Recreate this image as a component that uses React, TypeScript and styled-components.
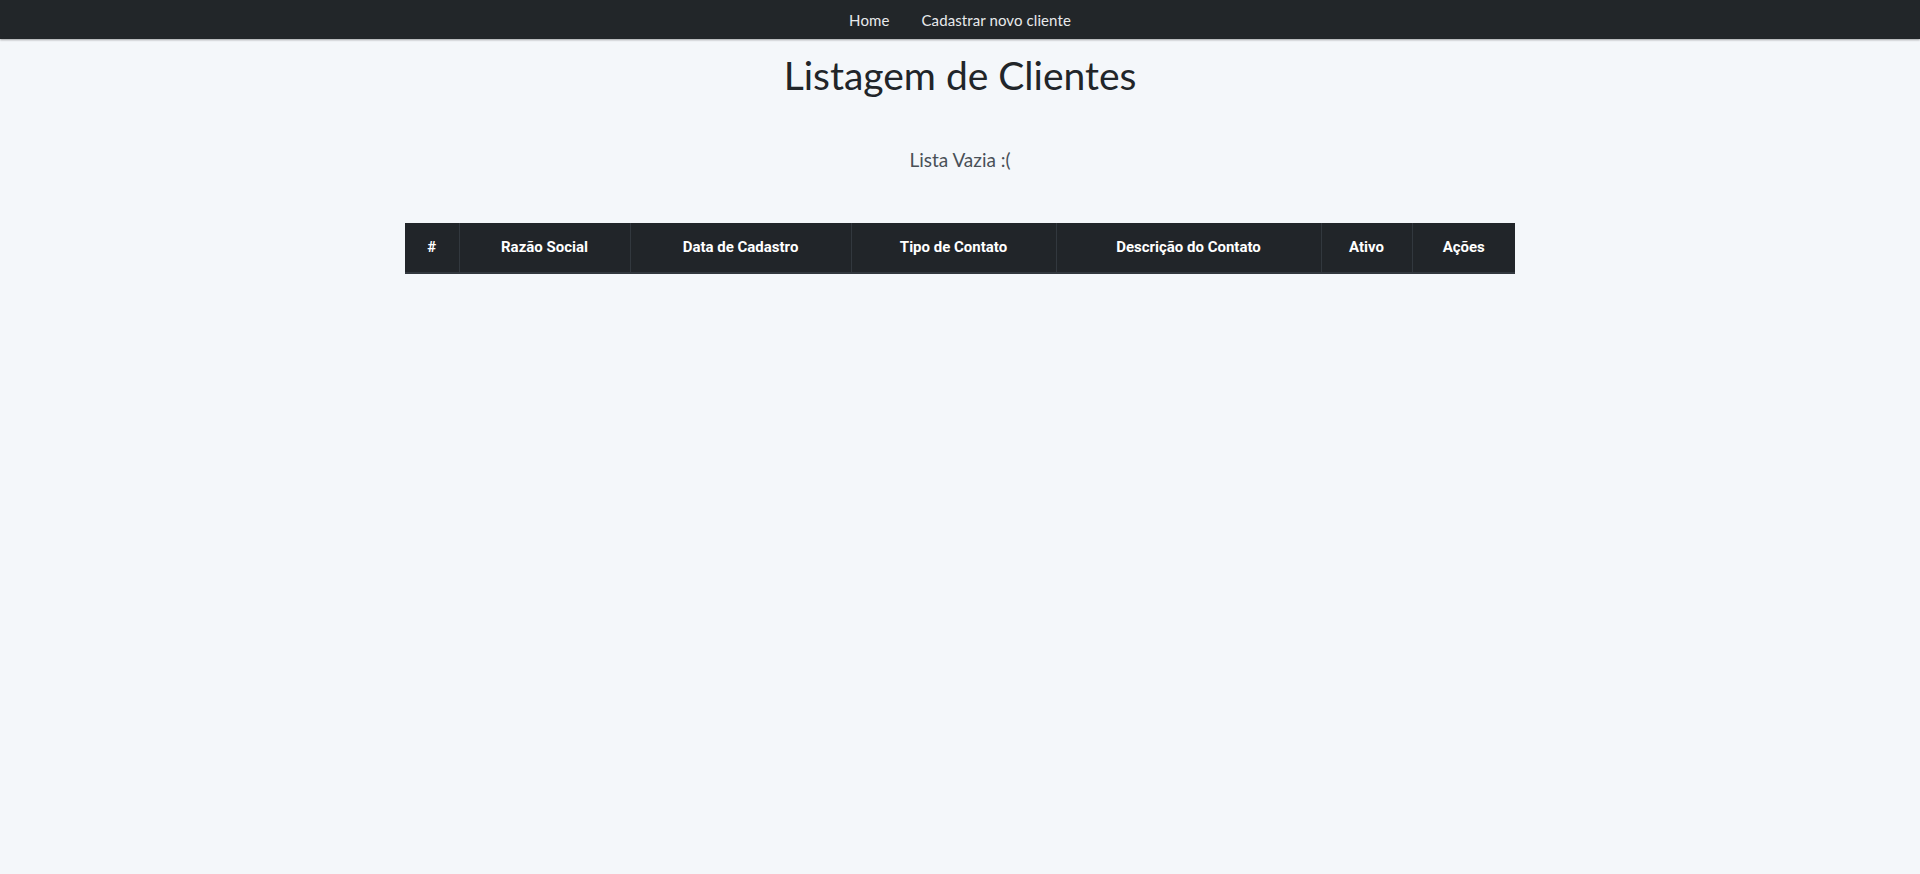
import React from "react";
import styled, { createGlobalStyle } from "styled-components";

const GlobalStyle = createGlobalStyle`
  html, body {
    margin: 0;
    padding: 0;
    background: #f4f7fa;
    font-family: "Lato", "Open Sans", sans-serif;
    color: #212529;
  }
  * { box-sizing: border-box; }
`;

const NavBar = styled.nav`
  height: 39px;
  background: #222629;
  display: flex;
  justify-content: center;
  align-items: center;
  gap: 32px;
  box-shadow: 0 1px 2px rgba(0, 0, 0, 0.35);
`;

const NavLink = styled.a`
  color: #e8eaec;
  font-size: 15px;
  text-decoration: none;
  letter-spacing: 0.1px;
`;

const Container = styled.main`
  width: 1110px;
  margin: 0 auto;
  display: flex;
  flex-direction: column;
  align-items: center;
`;

const Title = styled.h1`
  margin: 13px 0 0;
  font-size: 39px;
  font-weight: 400;
  line-height: 1.2;
  color: #212529;
`;

const Empty = styled.p`
  margin: 50px 0 0;
  font-size: 19px;
  font-weight: 400;
  line-height: 1.2;
  color: #495057;
`;

const Table = styled.table`
  margin-top: 51px;
  width: 1110px;
  border-collapse: collapse;
  table-layout: fixed;
`;

const Th = styled.th<{ $w: number }>`
  width: ${(p) => p.$w}px;
  height: 50px;
  padding: 0 12px;
  background: #212529;
  color: #ffffff;
  font-family: "Roboto", "Lato", sans-serif;
  font-weight: 700;
  font-size: 15px;
  text-align: center;
  border-left: 1px solid #32383e;
  border-bottom: 2px solid #32383e;
  &:first-child {
    border-left: none;
  }
`;

const columns: [string, number][] = [
  ["#", 54],
  ["Razão Social", 171],
  ["Data de Cadastro", 221],
  ["Tipo de Contato", 205],
  ["Descrição do Contato", 265],
  ["Ativo", 91],
  ["Ações", 103],
];

export default function App() {
  return (
    <>
      <GlobalStyle />
      <NavBar>
        <NavLink href="#">Home</NavLink>
        <NavLink href="#">Cadastrar novo cliente</NavLink>
      </NavBar>
      <Container>
        <Title>Listagem de Clientes</Title>
        <Empty>Lista Vazia :(</Empty>
        <Table>
          <thead>
            <tr>
              {columns.map(([label, w]) => (
                <Th key={label} $w={w}>
                  {label}
                </Th>
              ))}
            </tr>
          </thead>
        </Table>
      </Container>
    </>
  );
}
